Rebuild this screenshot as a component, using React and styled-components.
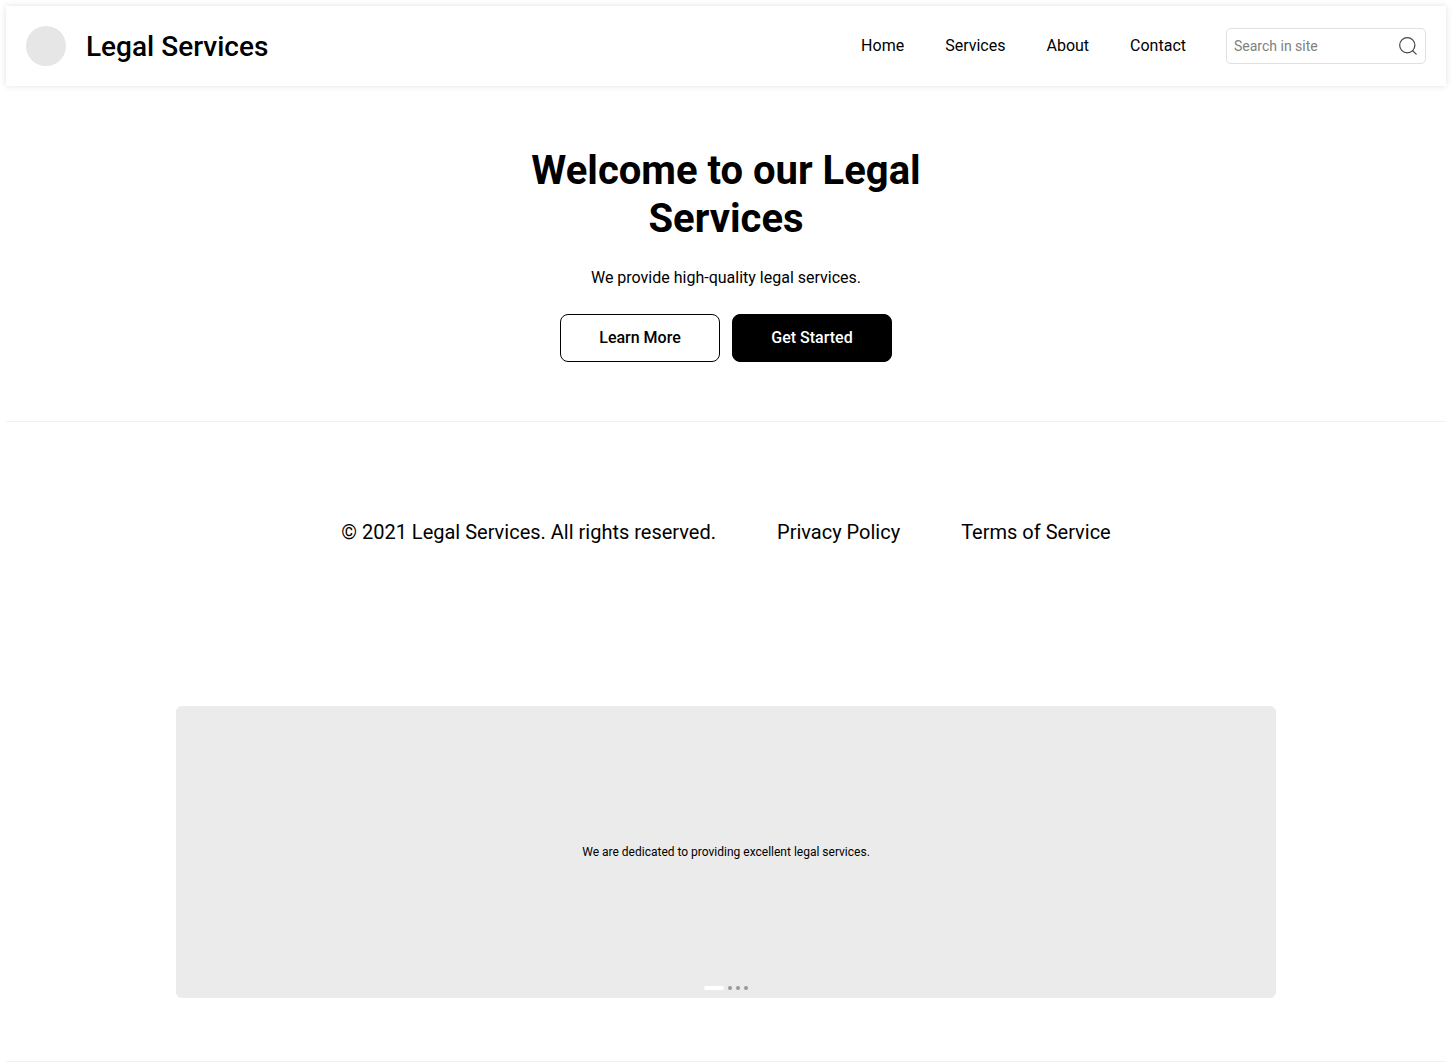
import React from "react";
import styled, { createGlobalStyle } from "styled-components";

const Global = createGlobalStyle`
  *, *::before, *::after { box-sizing: border-box; }
  body { margin: 0; background: #fff; color: #000; font-family: Roboto, "Liberation Sans", sans-serif; font-size: 16px; }
  h1, p { margin: 0; }
`;

const Page = styled.div`
  padding: 6px 6px 0;
`;

const Header = styled.header`
  display: flex;
  align-items: center;
  justify-content: space-between;
  height: 80px;
  padding: 0 20px;
  background: #fff;
  box-shadow: 0 0 6px rgba(0, 0, 0, 0.12);
`;

const Brand = styled.div`
  display: flex;
  align-items: center;
  gap: 20px;
  font-size: 28px;
  line-height: 37px;
  font-weight: 500;
`;

const Avatar = styled.span`
  width: 40px;
  height: 40px;
  border-radius: 50%;
  background: #e6e6e6;
`;

const HeaderEnd = styled.div`
  display: flex;
  align-items: center;
  gap: 40px;
`;

const Nav = styled.nav`
  display: flex;
  gap: 41px;
`;

const TextLink = styled.a`
  color: inherit;
  text-decoration: none;
`;

const NavLink = styled(TextLink)`
  line-height: 24px;
`;

const SearchBox = styled.label`
  display: flex;
  align-items: center;
  width: 200px;
  height: 36px;
  padding: 0 7px;
  border: 1px solid #e0e0e0;
  border-radius: 5px;
`;

const SearchInput = styled.input`
  flex: 1;
  min-width: 0;
  padding: 0;
  border: 0;
  outline: 0;
  background: none;
  font: inherit;
  font-size: 14px;
  line-height: 20px;
  &::placeholder { color: #808080; opacity: 1; }
`;

const Hero = styled.section`
  display: flex;
  flex-direction: column;
  align-items: center;
  padding: 61px 20px 59px;
  border-bottom: 1px solid #f0f0f0;
  text-align: center;
`;

const Title = styled.h1`
  max-width: 480px;
  font-size: 40px;
  line-height: 48px;
  font-weight: 700;
`;

const Lead = styled.p`
  margin: 23px 0 24px;
  line-height: 24px;
`;

const Actions = styled.div`
  display: flex;
  gap: 12px;
`;

const Button = styled.button`
  width: 160px;
  height: 48px;
  padding: 0;
  border: 1px solid #000;
  border-radius: 8px;
  background: ${(p) => (p.$primary ? "#000" : "#fff")};
  color: ${(p) => (p.$primary ? "#fff" : "#000")};
  font: inherit;
  font-weight: 500;
  line-height: 24px;
`;

const Legal = styled.footer`
  display: flex;
  justify-content: center;
  gap: 61px;
  padding: 96px 20px 160px;
  font-size: 20px;
  line-height: 28px;
`;

const Slide = styled.section`
  display: flex;
  flex-direction: column;
  align-items: center;
  max-width: 1100px;
  height: 292px;
  margin: 0 auto 63px;
  padding: 8px;
  border-radius: 6px;
  background: #ebebeb;
`;

const SlideText = styled.p`
  margin: auto 0;
  padding-top: 4px;
  font-size: 12px;
  line-height: 16px;
`;

const Dots = styled.div`
  display: flex;
  gap: 4px;
`;

const Dot = styled.button`
  width: ${(p) => (p.$active ? "20px" : "4px")};
  height: 4px;
  padding: 0;
  border: 0;
  border-radius: 2px;
  background: ${(p) => (p.$active ? "#fff" : "#999")};
`;

const Rule = styled.hr`
  margin: 0;
  border: 0;
  border-top: 1px solid #f0f0f0;
`;

const links = ["Home", "Services", "About", "Contact"];

export default function App() {
  return (
    <>
      <Global />
      <Page>
        <Header>
          <Brand><Avatar />Legal Services</Brand>
          <HeaderEnd>
            <Nav>{links.map((l) => <NavLink key={l} href="#">{l}</NavLink>)}</Nav>
            <SearchBox>
              <SearchInput type="search" aria-label="Search in site" placeholder="Search in site" />
              <svg width="20" height="20" viewBox="0 0 20 20" fill="none" stroke="#444" strokeWidth="1.2" strokeLinecap="round">
                <circle cx="9.3" cy="9.3" r="7.6" />
                <path d="M14.8 14.8 L18.2 18.2" />
              </svg>
            </SearchBox>
          </HeaderEnd>
        </Header>
        <Hero>
          <Title>Welcome to our Legal Services</Title>
          <Lead>We provide high-quality legal services.</Lead>
          <Actions>
            <Button>Learn More</Button>
            <Button $primary>Get Started</Button>
          </Actions>
        </Hero>
        <Legal>
          <span>© 2021 Legal Services. All rights reserved.</span>
          <TextLink href="#">Privacy Policy</TextLink>
          <TextLink href="#">Terms of Service</TextLink>
        </Legal>
        <Slide>
          <SlideText>We are dedicated to providing excellent legal services.</SlideText>
          <Dots>
            {[0, 1, 2, 3].map((i) => <Dot key={i} $active={i === 0} aria-label={`Slide ${i + 1}`} />)}
          </Dots>
        </Slide>
        <Rule />
      </Page>
    </>
  );
}
